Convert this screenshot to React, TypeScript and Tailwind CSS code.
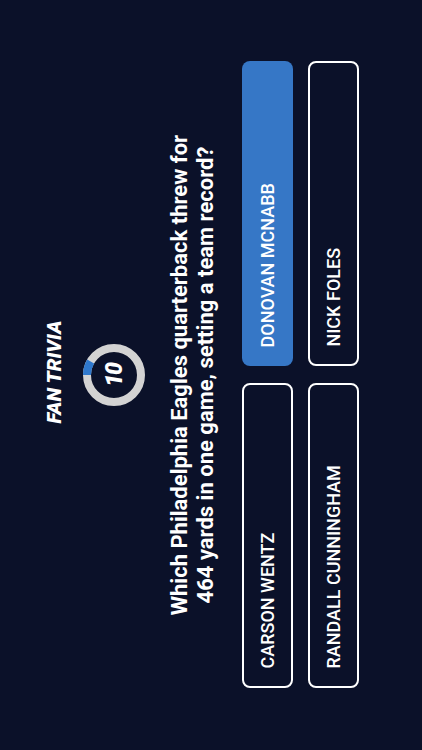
import React from "react";

const answers = ["CARSON WENTZ", "DONOVAN MCNABB", "RANDALL CUNNINGHAM", "NICK FOLES"];
const picked = "DONOVAN MCNABB";

function Timer({ seconds }: { seconds: number }) {
  const r = 27;
  const c = 2 * Math.PI * r;
  const arc = (30 / 360) * c;
  return (
    <div className="relative w-[62px] h-[62px] flex items-center justify-center">
      <svg width="62" height="62" viewBox="0 0 62 62" className="absolute inset-0">
        <circle cx="31" cy="31" r={r} fill="none" stroke="#d3d3d3" strokeWidth="8" />
        <circle
          cx="31"
          cy="31"
          r={r}
          fill="none"
          stroke="#2f78cc"
          strokeWidth="8"
          strokeDasharray={`${arc} ${c}`}
          transform="rotate(-90 31 31)"
        />
      </svg>
      <span className="relative text-[23px] font-black italic text-white tracking-tighter leading-none">{seconds}</span>
    </div>
  );
}

export default function App() {
  return (
    <div className="w-[422px] h-[750px] overflow-hidden bg-[#0b1129] flex items-center justify-center font-['Roboto',sans-serif]">
      <div className="w-[750px] h-[422px] shrink-0 -rotate-90 flex flex-col items-center pt-[42px]">
        <h1 className="ml-[6px] text-[20px] font-black italic text-white leading-[24px]">FAN TRIVIA</h1>
        <div className="mt-[17px]">
          <Timer seconds={10} />
        </div>
        <p className="mt-[22px] text-[22px] font-bold text-white text-center leading-[26px] w-[580px]">
          Which Philadelphia Eagles quarterback threw for
          <br />
          464 yards in one game, setting a team record?
        </p>
        <div className="mt-[23px] grid grid-cols-[305px_305px] gap-x-[17px] gap-y-[15px]">
          {answers.map((a) => (
            <button
              key={a}
              className={
                a === picked
                  ? "h-[51px] rounded-lg bg-[#3677c6] pl-[19px] text-left text-[18px] font-medium text-white"
                  : "h-[51px] rounded-lg border-2 border-white pl-[18px] text-left text-[18px] font-medium text-white"
              }
            >
              {a}
            </button>
          ))}
        </div>
      </div>
    </div>
  );
}
